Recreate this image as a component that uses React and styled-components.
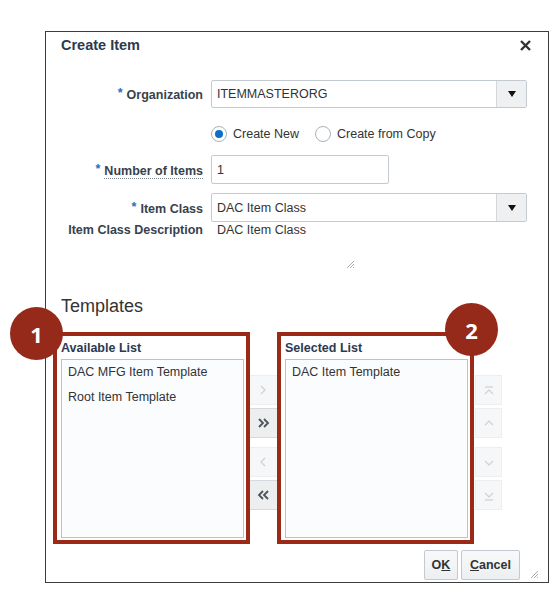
import styled, { createGlobalStyle } from "styled-components";

const GlobalStyle = createGlobalStyle`
  html, body {
    margin: 0;
    background: #ffffff;
  }
  body {
    font-family: "Liberation Sans", Arial, sans-serif;
    color: #333333;
  }
`;

const Page = styled.div`
  position: relative;
  width: 556px;
  height: 592px;
  box-sizing: border-box;
  padding: 31px 0 0 45px;
`;

const Dialog = styled.div`
  width: 504px;
  height: 552px;
  box-sizing: border-box;
  border: 1px solid #3c3c3c;
  display: flex;
  flex-direction: column;
  background: #ffffff;
`;

const Header = styled.div`
  display: flex;
  justify-content: space-between;
  align-items: flex-start;
  padding: 4px 17px 0 15px;
`;

const Title = styled.h1`
  margin: 0;
  font-size: 14.5px;
  line-height: 18px;
  font-weight: bold;
  color: #2c3a4f;
`;

const CloseIcon = styled.svg`
  margin-top: 4px;
  display: block;
`;

const Form = styled.div`
  display: flex;
  flex-direction: column;
  padding-left: 21px;
  margin-top: 26px;
`;

const Row = styled.div`
  display: grid;
  grid-template-columns: 136px 316px;
  column-gap: 8px;
  align-items: ${(p) => p.$align || "center"};
  margin-top: ${(p) => p.$mt || 0}px;
`;

const Label = styled.label`
  text-align: right;
  font-size: 12.5px;
  line-height: 16px;
  font-weight: bold;
  color: #38424e;
  white-space: nowrap;
`;

const Star = styled.span`
  color: #1f6fbf;
  vertical-align: 2px;
  margin-right: 4px;
`;

const Help = styled.span`
  border-bottom: 1px dotted #7a8590;
`;

const Field = styled.div`
  display: flex;
  align-items: stretch;
  width: ${(p) => p.$w || 316}px;
  height: ${(p) => p.$h || 29}px;
  box-sizing: border-box;
  border: 1px solid #c4cad1;
  border-radius: 2px;
  background: #ffffff;
`;

const FieldText = styled.span`
  flex: 1;
  display: flex;
  align-items: center;
  padding-left: 5px;
  font-size: 12.5px;
  color: #333333;
`;

const DropButton = styled.span`
  width: 29px;
  display: flex;
  align-items: center;
  justify-content: center;
  border-left: 1px solid #d3d8dd;
  background: #eef0f2;
  &::after {
    content: "";
    border-left: 4.5px solid transparent;
    border-right: 4.5px solid transparent;
    border-top: 6px solid #111111;
  }
`;

const RadioGroup = styled.div`
  display: flex;
  align-items: center;
  height: 20px;
`;

const RadioOption = styled.span`
  display: flex;
  align-items: center;
  gap: 6px;
  margin-right: 16px;
  font-size: 12.5px;
  color: #333333;
`;

const RadioCircle = styled.span`
  width: 16px;
  height: 16px;
  box-sizing: border-box;
  border-radius: 50%;
  border: 1px solid #a9b2bb;
  background: #ffffff;
  display: flex;
  align-items: center;
  justify-content: center;
  &::after {
    content: "";
    width: 8px;
    height: 8px;
    border-radius: 50%;
    background: ${(p) => (p.$checked ? "#0b6fca" : "transparent")};
  }
`;

const DescBox = styled.div`
  width: 143px;
  height: 46px;
  display: flex;
  flex-direction: column;
  padding-left: 6px;
  box-sizing: border-box;
`;

const DescText = styled.span`
  font-size: 12.5px;
  line-height: 16px;
  color: #333333;
`;

const Grip = styled.svg`
  display: block;
  align-self: flex-end;
  margin-top: auto;
  margin-left: ${(p) => p.$ml || 0}px;
  margin-bottom: ${(p) => p.$mb || 0}px;
`;

const SectionTitle = styled.h2`
  margin: 27px 0 0 15px;
  font-size: 18px;
  line-height: 22px;
  font-weight: normal;
  color: #333333;
`;

const Shuttle = styled.div`
  display: grid;
  grid-template-columns: 183px 41px 183px 34px;
  margin: 23px 0 0 15px;
`;

const ListColumn = styled.div`
  position: relative;
  display: flex;
  flex-direction: column;
`;

const Highlight = styled.div`
  position: absolute;
  left: -8px;
  right: -6px;
  top: -8px;
  bottom: -6px;
  border: 4px solid #9a2916;
  z-index: 2;
  pointer-events: none;
`;

const ListLabel = styled.div`
  font-size: 12.5px;
  line-height: 16px;
  font-weight: bold;
  color: #2c3a4f;
  margin-bottom: 3px;
`;

const ListBox = styled.div`
  height: 179px;
  box-sizing: border-box;
  border: 1px solid #b9c2cb;
  background: #fbfcfe;
`;

const ListItem = styled.div`
  padding-left: 6px;
  font-size: 12.5px;
  line-height: 25px;
  color: #333333;
`;

const ButtonColumn = styled.div`
  display: flex;
  flex-direction: column;
  gap: 9px;
  padding: 35px 0 0 ${(p) => p.$pl}px;
`;

const ButtonPair = styled.div`
  display: flex;
  flex-direction: column;
  gap: 3px;
`;

const ShuttleButton = styled.div`
  width: ${(p) => p.$w}px;
  height: 30px;
  box-sizing: border-box;
  display: flex;
  align-items: center;
  justify-content: center;
  border: 1px solid ${(p) => (p.$on ? "#d6dade" : "#eceef0")};
  background: ${(p) => (p.$on ? "#eceef0" : "#f6f7f8")};
  color: ${(p) => (p.$on ? "#4d535a" : "#cdd1d5")};
`;

const Footer = styled.div`
  margin-top: auto;
  display: flex;
  justify-content: flex-end;
  align-items: flex-end;
  gap: 3px;
  padding: 0 10px 2px 0;
`;

const FooterButton = styled.button`
  width: ${(p) => p.$w}px;
  height: 30px;
  padding: 0;
  border: 1px solid #c3c9cf;
  border-radius: 2px;
  background: linear-gradient(#f8f9fa, #eceff1);
  font-family: "Liberation Sans", Arial, sans-serif;
  font-size: 12.5px;
  font-weight: bold;
  color: #333333;
`;

const Badge = styled.div`
  position: absolute;
  left: ${(p) => p.$x}px;
  top: ${(p) => p.$y}px;
  width: 53px;
  height: 53px;
  border-radius: 50%;
  background: #952a1a;
  color: #ffffff;
  display: flex;
  align-items: center;
  justify-content: center;
  font-family: "Open Sans", "Liberation Sans", sans-serif;
  font-size: 22px;
  font-weight: bold;
  z-index: 3;
`;

const Chevron = ({ dir = "right", double = false }) => {
  const paths = {
    right: double ? ["M3 2 L7 6 L3 10", "M8 2 L12 6 L8 10"] : ["M5 2 L9 6 L5 10"],
    left: double ? ["M7 2 L3 6 L7 10", "M12 2 L8 6 L12 10"] : ["M9 2 L5 6 L9 10"],
    up: ["M3 8 L7 4 L11 8"],
    down: ["M3 5 L7 9 L11 5"],
    top: ["M3 3 L11 3", "M3 10 L7 6 L11 10"],
    bottom: ["M3 11 L11 11", "M3 4 L7 8 L11 4"],
  };
  return (
    <svg width="14" height="12" viewBox="0 0 14 12">
      {paths[dir].map((d) => (
        <path key={d} d={d} fill="none" stroke="currentColor" strokeWidth={double ? 1.8 : 1.2} />
      ))}
    </svg>
  );
};

const ResizeGrip = ({ ml, mb }) => (
  <Grip $ml={ml} $mb={mb} width="7" height="7" viewBox="0 0 7 7">
    <path d="M0 7 L7 0 M3 7 L7 3 M6 7 L7 6" stroke="#9aa3ab" strokeWidth="0.9" />
  </Grip>
);

export default function App() {
  return (
    <>
      <GlobalStyle />
      <Page>
        <Dialog>
          <Header>
            <Title>Create Item</Title>
            <CloseIcon width="11" height="11" viewBox="0 0 11 11">
              <path d="M1 1 L10 10 M10 1 L1 10" stroke="#333" strokeWidth="2.4" />
            </CloseIcon>
          </Header>

          <Form>
            <Row>
              <Label><Star>*</Star>Organization</Label>
              <Field $h={28}>
                <FieldText>ITEMMASTERORG</FieldText>
                <DropButton />
              </Field>
            </Row>
            <Row $mt={16}>
              <span />
              <RadioGroup>
                <RadioOption><RadioCircle $checked />Create New</RadioOption>
                <RadioOption><RadioCircle />Create from Copy</RadioOption>
              </RadioGroup>
            </Row>
            <Row $mt={11}>
              <Label><Star>*</Star><Help>Number of Items</Help></Label>
              <Field $w={178}>
                <FieldText>1</FieldText>
              </Field>
            </Row>
            <Row $mt={9}>
              <Label><Star>*</Star>Item Class</Label>
              <Field>
                <FieldText>DAC Item Class</FieldText>
                <DropButton />
              </Field>
            </Row>
            <Row $align="start">
              <Label>Item Class Description</Label>
              <DescBox>
                <DescText>DAC Item Class</DescText>
                <ResizeGrip />
              </DescBox>
            </Row>
          </Form>

          <SectionTitle>Templates</SectionTitle>

          <Shuttle>
            <ListColumn>
              <Highlight />
              <ListLabel>Available List</ListLabel>
              <ListBox>
                <ListItem>DAC MFG Item Template</ListItem>
                <ListItem>Root Item Template</ListItem>
              </ListBox>
            </ListColumn>
            <ButtonColumn $pl={4}>
              <ButtonPair>
                <ShuttleButton $w={30}><Chevron dir="right" /></ShuttleButton>
                <ShuttleButton $w={30} $on><Chevron dir="right" double /></ShuttleButton>
              </ButtonPair>
              <ButtonPair>
                <ShuttleButton $w={30}><Chevron dir="left" /></ShuttleButton>
                <ShuttleButton $w={30} $on><Chevron dir="left" double /></ShuttleButton>
              </ButtonPair>
            </ButtonColumn>
            <ListColumn>
              <Highlight />
              <ListLabel>Selected List</ListLabel>
              <ListBox>
                <ListItem>DAC Item Template</ListItem>
              </ListBox>
            </ListColumn>
            <ButtonColumn $pl={7}>
              <ButtonPair>
                <ShuttleButton $w={27}><Chevron dir="top" /></ShuttleButton>
                <ShuttleButton $w={27}><Chevron dir="up" /></ShuttleButton>
              </ButtonPair>
              <ButtonPair>
                <ShuttleButton $w={27}><Chevron dir="down" /></ShuttleButton>
                <ShuttleButton $w={27}><Chevron dir="bottom" /></ShuttleButton>
              </ButtonPair>
            </ButtonColumn>
          </Shuttle>

          <Footer>
            <FooterButton $w={34}>O<u>K</u></FooterButton>
            <FooterButton $w={59}><u>C</u>ancel</FooterButton>
            <ResizeGrip ml={8} mb={2} />
          </Footer>
        </Dialog>
        <Badge $x={10} $y={307}>1</Badge>
        <Badge $x={445} $y={303}>2</Badge>
      </Page>
    </>
  );
}
